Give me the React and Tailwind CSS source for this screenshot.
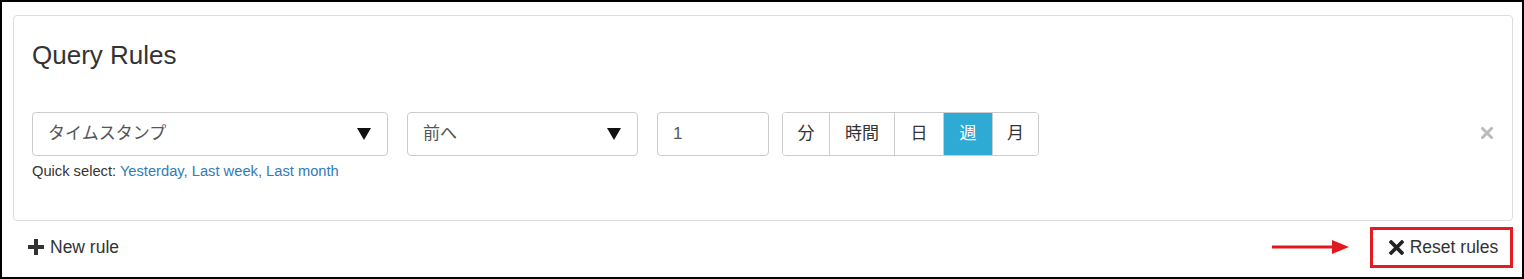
import { useState } from 'react'

const font = { fontFamily: '"Liberation Sans", "Noto Sans CJK JP", Arial, sans-serif' }

function Caret() {
  return (
    <svg width="14" height="12" viewBox="0 0 14 12" className="shrink-0">
      <polygon points="0,0 14,0 7,12" fill="#111" />
    </svg>
  )
}

function SelectBox({ value, width }) {
  return (
    <div
      className={`${width} h-[44px] flex items-center justify-between border border-[#ccc] rounded-[4px] bg-white pl-[15px] pr-[16px] text-[17px] text-[#555]`}
    >
      <span>{value}</span>
      <Caret />
    </div>
  )
}

const units = ['分', '時間', '日', '週', '月']
const unitWidths = ['w-[46px]', 'w-[65px]', 'w-[49px]', 'w-[49px]', 'w-[46px]']

export default function App() {
  const [unit, setUnit] = useState('週')

  return (
    <div className="w-[1524px] h-[279px] border-2 border-black bg-white pl-[11px] pr-[9px] pt-[13px] text-[#333]" style={font}>
      <div className="h-[206px] border border-[#ddd] rounded-[4px] px-[18px] pt-[24px] relative">
        <h2 className="text-[26px] leading-[30px] text-[#333]">Query Rules</h2>

        <div className="mt-[42px] flex items-start">
          <div>
            <SelectBox value="タイムスタンプ" width="w-[356px]" />
            <div className="mt-[5px] text-[14.7px] leading-[20px]">
              Quick select:{' '}
              <span className="text-[#337ab7]">
                <a>Yesterday</a>, <a>Last week</a>, <a>Last month</a>
              </span>
            </div>
          </div>

          <div className="ml-[19px]">
            <SelectBox value="前へ" width="w-[231px]" />
          </div>

          <div className="ml-[19px] w-[112px] h-[44px] border border-[#ccc] rounded-[4px] flex items-center pl-[15px] text-[17px] text-[#555]">
            1
          </div>

          <div className="ml-[13px] h-[44px] flex border border-[#ccc] rounded-[4px] overflow-hidden text-[17px]">
            {units.map((u, i) => (
              <button
                key={u}
                onClick={() => setUnit(u)}
                className={`${unitWidths[i]} h-full flex items-center justify-center ${i > 0 ? 'border-l border-[#ccc]' : ''} ${
                  unit === u ? 'bg-[#2faad4] text-white border-[#2faad4]' : 'bg-white text-[#333]'
                }`}
              >
                {u}
              </button>
            ))}
          </div>

          <button className="ml-auto mt-[15px] mr-[1px] text-[#bbb]">
            <svg width="12" height="12" viewBox="0 0 12 12">
              <path d="M1.5 1.5 L10.5 10.5 M10.5 1.5 L1.5 10.5" stroke="#bbb" strokeWidth="3" strokeLinecap="square" />
            </svg>
          </button>
        </div>
      </div>

      <div className="flex items-center justify-between mt-[6px] h-[40px]">
        <button className="flex items-center ml-[15px] text-[17.5px] text-[#333]">
          <svg width="16" height="16" viewBox="0 0 16 16" className="mr-[6px]">
            <path d="M6 0h4v6h6v4h-6v6H6v-6H0V6h6z" fill="#333" />
          </svg>
          New rule
        </button>

        <div className="flex items-center">
          <svg width="78" height="16" viewBox="0 0 78 16" className="mr-[20px]">
            <line x1="0" y1="8" x2="62" y2="8" stroke="#e0191f" strokeWidth="3" />
            <polygon points="60,1 77,8 60,15" fill="#e0191f" />
          </svg>
          <button className="w-[143px] h-[41px] border-[3px] border-[#e31b23] flex items-center justify-center pl-[4px] text-[17.5px] text-[#333]">
            <svg width="15" height="15" viewBox="0 0 14 14" className="mr-[6px]">
              <path d="M2 2 L12 12 M12 2 L2 12" stroke="#222" strokeWidth="3.4" strokeLinecap="square" />
            </svg>
            Reset rules
          </button>
        </div>
      </div>
    </div>
  )
}
